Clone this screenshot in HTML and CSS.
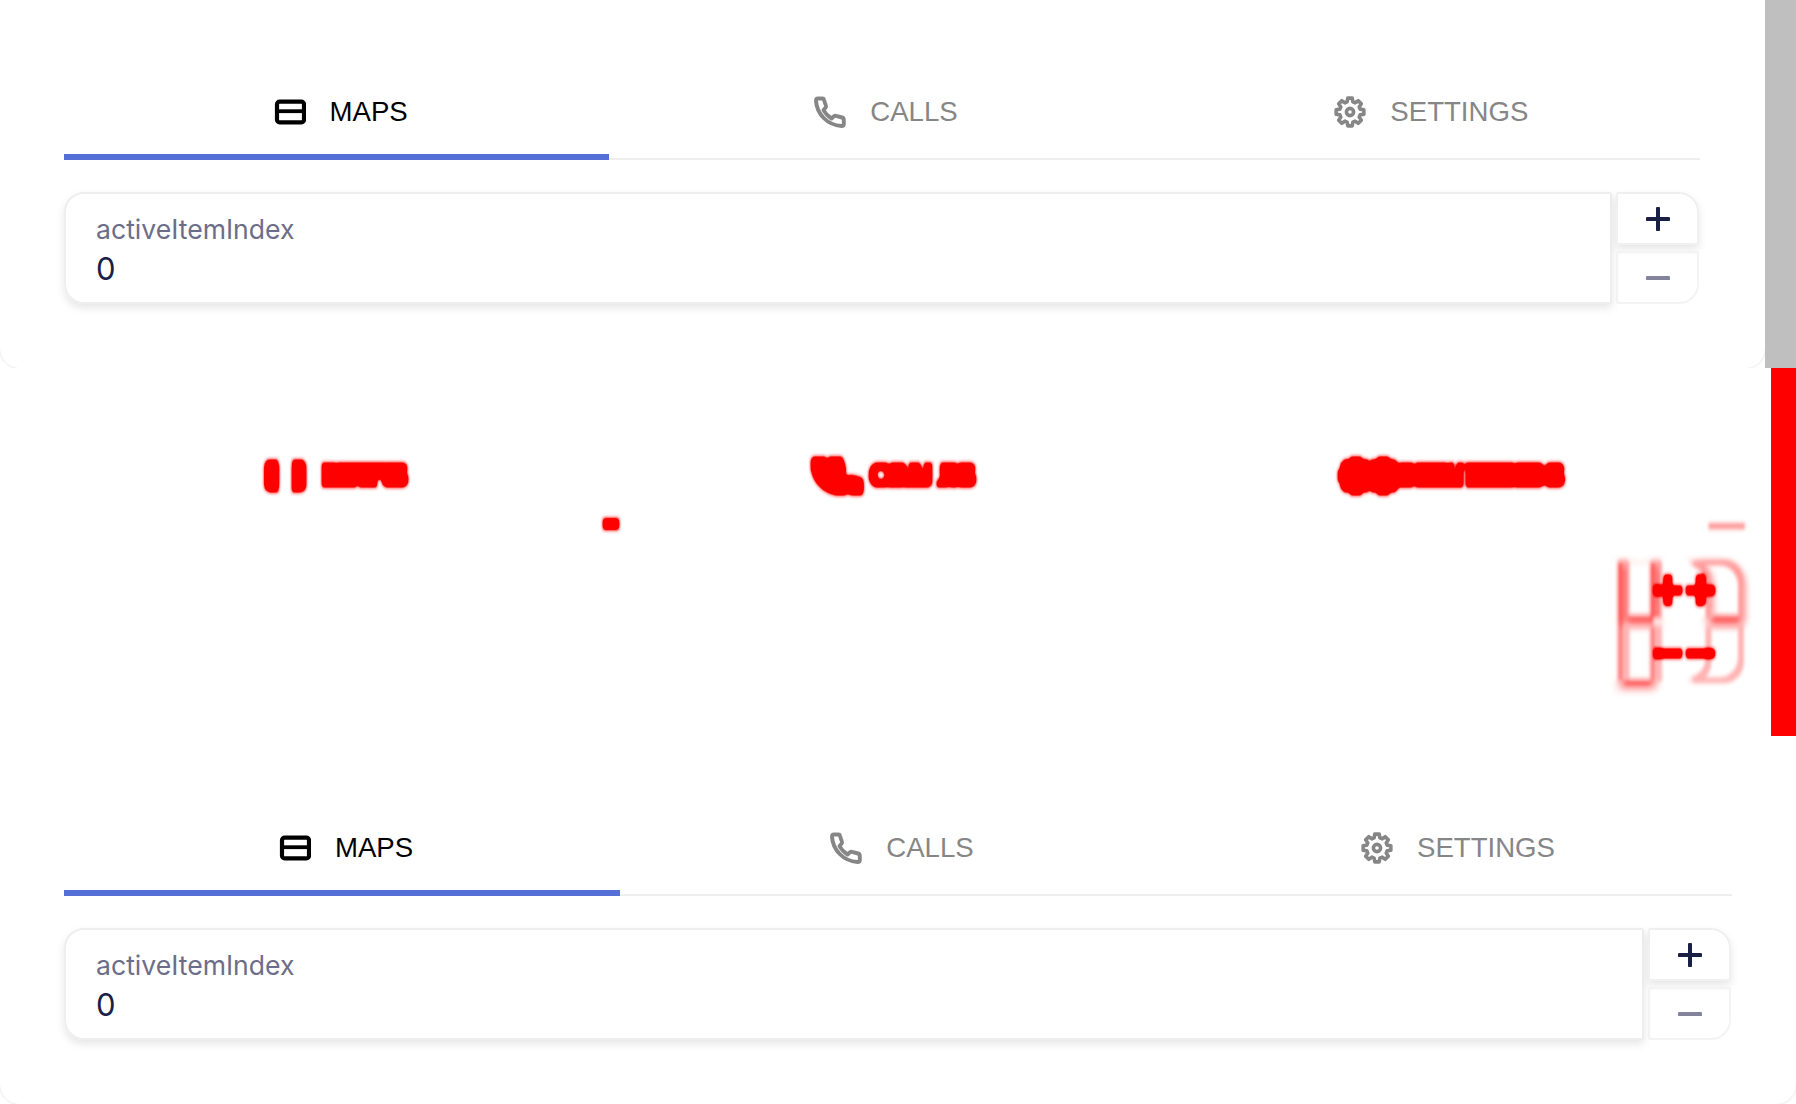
FILE: index.html
```html
<!DOCTYPE html>
<html>
	<head>
		<meta charset="UTF-8">
		<title>Tabs</title>
		<link rel="stylesheet" href="styles.css">
	</head>
	<body>
		<!-- shared icons and the red diff filter -->
		<svg class="defs" width="0" height="0">
			<symbol id="i-card" viewBox="0 0 32 32">
				<rect x="3" y="5.6" width="27" height="20.8" rx="2.6" fill="none" stroke="currentColor" stroke-width="4.2"/>
				<path d="M3 15.2H30" fill="none" stroke="currentColor" stroke-width="3.8"/>
			</symbol>
			<symbol id="i-phone" viewBox="0 0 32 32">
				<path d="M4 2.5H8.5Q9.7 2.5 10 4L12 10Q12.2 11 11.5 11.8L9.5 14Q12 19 17.5 22.5L20 20.2Q21 19.4 22 19.8L28 21.5Q29.8 22 29.8 24V28Q29.8 30 27.5 30C13 29 3 18 2 5Q2 2.5 4 2.5Z" fill="none" stroke="currentColor" stroke-width="3.9" stroke-linejoin="round"/>
			</symbol>
			<symbol id="i-gear" viewBox="0 0 32 32">
				<path d="M13.11 5.91L13.81 2.17H18.19L18.89 5.91L21.09 6.82L24.23 4.67L27.33 7.77L25.18 10.91L26.09 13.11L29.83 13.81V18.19L26.09 18.89L25.18 21.09L27.33 24.23L24.23 27.33L21.09 25.18L18.89 26.09L18.19 29.83H13.81L13.11 26.09L10.91 25.18L7.77 27.33L4.67 24.23L6.82 21.09L5.91 18.89L2.17 18.19V13.81L5.91 13.11L6.82 10.91L4.67 7.77L7.77 4.67L10.91 6.82Z" fill="none" stroke="currentColor" stroke-width="3.6" stroke-linejoin="round"/>
				<circle cx="16" cy="16" r="3.6" fill="none" stroke="currentColor" stroke-width="3.6"/>
			</symbol>
			<symbol id="i-plus" viewBox="0 0 24 24">
				<path d="M1.5 12H22.5M12 1.5V22.5" fill="none" stroke="currentColor" stroke-width="4" stroke-linecap="round"/>
			</symbol>
			<symbol id="i-minus" viewBox="0 0 24 24">
				<path d="M1.5 12H22.5" fill="none" stroke="currentColor" stroke-width="4" stroke-linecap="round"/>
			</symbol>
			<filter id="diff-red" x="0" y="0" width="100%" height="100%" color-interpolation-filters="sRGB">
				<feColorMatrix values="0 0 0 0 1  0 0 0 0 0  0 0 0 0 0  1.5 1.5 1.5 0 0"/>
				<feMorphology operator="dilate" radius="2"/>
				<feGaussianBlur stdDeviation="1.8"/>
				<feComponentTransfer>
					<feFuncA type="table" tableValues="0 0.35 1 1 1"/>
				</feComponentTransfer>
			</filter>
		</svg>

		<div class="row">
			<div class="panel panel-top">
				<div class="tabs">
					<div class="tab active"><svg class="tab-icon"><use href="#i-card"/></svg><span>MAPS</span></div>
					<div class="tab"><svg class="tab-icon"><use href="#i-phone"/></svg><span>CALLS</span></div>
					<div class="tab"><svg class="tab-icon"><use href="#i-gear"/></svg><span>SETTINGS</span></div>
				</div>
				<div class="counter">
					<div class="card">
						<div class="card-label">activeItemIndex</div>
						<div class="card-value">0</div>
					</div>
					<div class="stepper">
						<div class="step step-plus"><svg class="step-icon"><use href="#i-plus"/></svg></div>
						<div class="step step-minus"><svg class="step-icon"><use href="#i-minus"/></svg></div>
					</div>
				</div>
			</div>
			<div class="scrollbar"></div>
		</div>

		<!-- difference of the panel above and the panel below -->
		<div class="row">
			<div class="diff-view">
				<div class="diff-stage">
					<div class="panel diff-layer diff-a">
						<div class="tabs">
							<div class="tab active"><svg class="tab-icon"><use href="#i-card"/></svg><span>MAPS</span></div>
							<div class="tab"><svg class="tab-icon"><use href="#i-phone"/></svg><span>CALLS</span></div>
							<div class="tab"><svg class="tab-icon"><use href="#i-gear"/></svg><span>SETTINGS</span></div>
						</div>
						<div class="counter">
							<div class="card">
								<div class="card-label">activeItemIndex</div>
								<div class="card-value">0</div>
							</div>
							<div class="stepper">
								<div class="step step-plus"><svg class="step-icon"><use href="#i-plus"/></svg></div>
								<div class="step step-minus"><svg class="step-icon"><use href="#i-minus"/></svg></div>
							</div>
						</div>
					</div>
					<div class="panel diff-layer diff-b">
						<div class="tabs">
							<div class="tab active"><svg class="tab-icon"><use href="#i-card"/></svg><span>MAPS</span></div>
							<div class="tab"><svg class="tab-icon"><use href="#i-phone"/></svg><span>CALLS</span></div>
							<div class="tab"><svg class="tab-icon"><use href="#i-gear"/></svg><span>SETTINGS</span></div>
						</div>
						<div class="counter">
							<div class="card">
								<div class="card-label">activeItemIndex</div>
								<div class="card-value">0</div>
							</div>
							<div class="stepper">
								<div class="step step-plus"><svg class="step-icon"><use href="#i-plus"/></svg></div>
								<div class="step step-minus"><svg class="step-icon"><use href="#i-minus"/></svg></div>
							</div>
						</div>
					</div>
				</div>
			</div>
			<div class="diff-bar"></div>
		</div>

		<div class="row">
			<div class="panel panel-bottom">
				<div class="tabs">
					<div class="tab active"><svg class="tab-icon"><use href="#i-card"/></svg><span>MAPS</span></div>
					<div class="tab"><svg class="tab-icon"><use href="#i-phone"/></svg><span>CALLS</span></div>
					<div class="tab"><svg class="tab-icon"><use href="#i-gear"/></svg><span>SETTINGS</span></div>
				</div>
				<div class="counter">
					<div class="card">
						<div class="card-label">activeItemIndex</div>
						<div class="card-value">0</div>
					</div>
					<div class="stepper">
						<div class="step step-plus"><svg class="step-icon"><use href="#i-plus"/></svg></div>
						<div class="step step-minus"><svg class="step-icon"><use href="#i-minus"/></svg></div>
					</div>
				</div>
			</div>
		</div>
	</body>
</html>
```

FILE: styles.css
```css
html, body{
	margin: 0;
	padding: 0;
	background: #fff;
}
body{
	width: 1796px;
	height: 1104px;
	overflow: hidden;
}
.defs{
	position: absolute;
}
.row{
	display: flex;
	height: 368px;
}
.panel{
	flex: 1;
	box-sizing: border-box;
	padding: 64px;
	background: #fff;
}
.panel-top{
	padding-right: 65px;
	border-radius: 0 0 20px 20px;
	box-shadow: 0 0 3px rgba(0,0,0,0.15);
	clip-path: inset(0 0 0 0);
}
.panel-bottom{
	border-radius: 0 0 20px 20px;
	box-shadow: 0 0 3px rgba(0,0,0,0.15);
	clip-path: inset(0 0 0 0);
}
.scrollbar{
	width: 31px;
	background: #bfbfbf;
}

/* tabs */
.tabs{
	display: flex;
	height: 96px;
	border-bottom: 2px solid #eee;
	box-sizing: border-box;
}
.tab{
	flex: 1;
	display: flex;
	align-items: center;
	justify-content: center;
	gap: 20px;
	margin-bottom: -2px;
	padding-left: 4px;
	font-family: "Liberation Sans", Arial, sans-serif;
	font-size: 27.6px;
	color: #868686;
}
.tab.active{
	color: #000;
	border-bottom: 6px solid #5470d6;
	padding-top: 6px;
}
.tab-icon{
	width: 32px;
	height: 32px;
	margin: 0 4px;
}

/* counter */
.counter{
	display: flex;
	gap: 4px;
	height: 112px;
	margin: 32px 1px 0 0;
}
.card{
	flex: 1;
	box-sizing: border-box;
	padding: 19px 30px;
	border: 2px solid #eee;
	border-radius: 20px 2px 2px 20px;
	box-shadow: 0 4px 8px rgba(0,0,0,0.1);
	font-family: Inter, sans-serif;
}
.card-label{
	font-size: 26.6px;
	line-height: 32px;
	color: #6c6e89;
}
.card-value{
	margin-top: 6px;
	font-size: 31px;
	line-height: 36px;
	color: #1a1f45;
}
.stepper{
	display: flex;
	flex-direction: column;
	gap: 6px;
	width: 83px;
}
.step{
	flex: 1;
	display: flex;
	align-items: center;
	justify-content: center;
	box-sizing: border-box;
}
.step-plus{
	border: 2px solid #f0f0f0;
	border-radius: 2px 20px 2px 2px;
	box-shadow: 0 4px 8px rgba(0,0,0,0.1);
	color: #1a1f45;
}
.step-minus{
	border: 2px solid #f3f3f3;
	border-radius: 2px 2px 20px 2px;
	color: #83849b;
}
.step-icon{
	width: 24px;
	height: 24px;
}

/* diff block */
.diff-view{
	flex: 1;
	position: relative;
	overflow: hidden;
}
.diff-stage{
	position: absolute;
	top: 0;
	left: 0;
	width: 1796px;
	height: 368px;
	background: #fff;
	filter: url(#diff-red);
	transform: scale(1.013, 1.07);
	transform-origin: 892px 171px;
}
.diff-layer{
	position: absolute;
	top: 0;
	left: 0;
	height: 368px;
}
.diff-a{
	width: 1765px;
	padding-right: 65px;
}
.diff-b{
	width: 1796px;
	mix-blend-mode: difference;
}
.diff-bar{
	width: 25px;
	background: #f00;
}
```
